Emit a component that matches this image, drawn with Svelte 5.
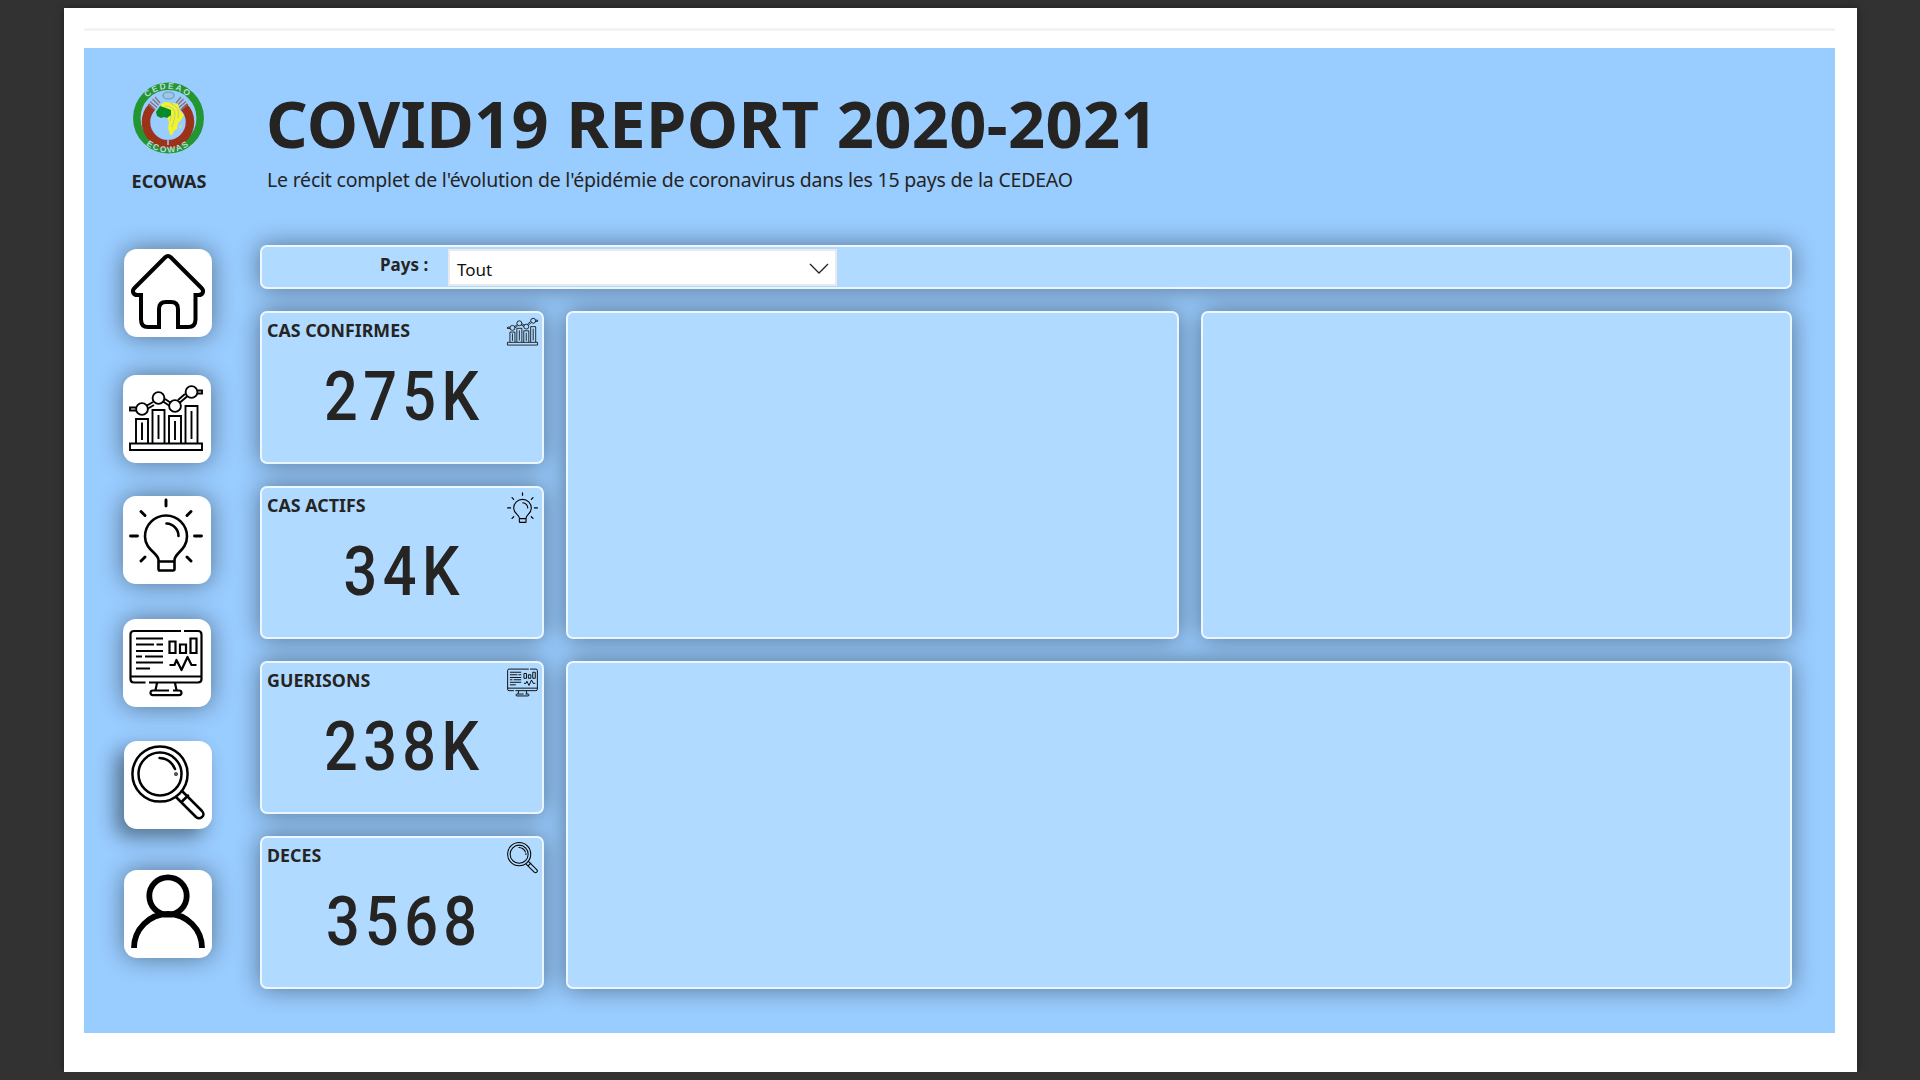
<script>
  const nav = ['home', 'chart', 'bulb', 'monitor', 'search', 'user'];
  const cards = [
    { title: 'CAS CONFIRMES', value: '275K', icon: 'chart' },
    { title: 'CAS ACTIFS', value: '34K', icon: 'bulb' },
    { title: 'GUERISONS', value: '238K', icon: 'monitor' },
    { title: 'DECES', value: '3568', icon: 'search' },
  ];
</script>

{#snippet icon(name)}
  <svg class="icon" viewBox="0 0 74 74" fill="none" stroke="#000" stroke-width="2.5" stroke-linecap="round" stroke-linejoin="round">
    {#if name === 'home'}
      <path stroke-width="4" stroke-linejoin="miter" stroke-linecap="butt" d="M30 74H17Q10 74 10 66.500V42H6.500C2 42 .5 38 3.500 35L34 4.500Q37 1.500 40 4.500L70.500 35C73.500 38 72 42 67.500 42H64.500V66.500Q64.500 74 57 74H47V56Q47 49 40 49H35Q28 49 28 56V74" transform="translate(0 -1)" />
    {:else if name === 'chart'}
      <g stroke-width="1.9" stroke-linecap="butt" stroke-linejoin="miter">
        <path d="M1 60.500h72v6.500H1zM7 60V36h12v24M23.500 60V27h12v33M40 60V33h12v27M56.500 60V23h12v37M13 39.500V57M29.500 32V56M46 38V57M62.500 28V56" />
        <path d="M7 24.500H1v3h6M68.500 7.500H73v3h-4.500M18 22.500l6-3.500M19 25.500l6-3.500M34 18.500l6 4M36 16l6 4M51 19.500l7-6M49 17l7-6" />
        <circle cx="13" cy="26" r="5.900" /><circle cx="29.500" cy="15" r="5.900" /><circle cx="46" cy="23" r="5.900" /><circle cx="62.500" cy="9" r="5.900" />
      </g>
    {:else if name === 'bulb'}
      <path stroke-width="2.600" d="M30 72.500h14q1.500 0 1.500-1.500V62C45.500 55 58 52 58 38.500A21 21 0 0 0 16 38.500C16 52 29.500 55 29.500 62v9q0 1.500 1.500 1.500M30 63.500h15M37.500 25.500A12.500 12.500 0 0 1 49.500 38" />
      <path stroke-width="2.900" d="M37 2v6M1.500 38h7M65.500 38h7M12 13.500l4 4M62 13.500l-4 4M12 63l4-4M62 63l-4-4" />
    {:else if name === 'monitor'}
      <g stroke-width="2.200" stroke-linecap="butt">
        <path d="M52 5H5Q1.500 5 1.500 8.500V53Q1.500 56.500 5 56.500H16.500M20 56.500H69Q72.500 56.500 72.500 53V8.500Q72.500 5 69 5H55M1.500 50.500H72.500M28 57l-1.500 7M46 57l1.500 7M40 64.500H24q-2.500 0-2.500 2.300t2.500 2.300h26q2.500 0 2.500-2.300t-2.500-2.300h-6" />
        <path d="M7 12.500h27M7 18.500h18M27.500 18.500H34M7 25h27M7 30.500h6M16 30.500h18M7 36.500h27M7 42.500h14M40.500 39h5l2-5 5 10 6-13 4 8h5" />
        <path stroke-linejoin="miter" d="M40.500 15.500h6V27h-6zM51 18.500h6V27h-6zM61.500 12.500h6V27h-6z" />
      </g>
    {:else if name === 'search'}
      <circle cx="29" cy="29" r="27.600" /><circle cx="29" cy="29" r="21.500" />
      <path d="M28.500 13q11 .5 15.500 11M45 52l20 20q3 2.500 6 0t0-6L51 46M51.500 56l5.500-5.500" />
      <circle cx="45" cy="29" r=".6" />
    {:else}
      <g stroke-width="5.800" stroke-linecap="butt"><circle cx="37" cy="22" r="18.700" /><path d="M3 74a34 34 0 0 1 68 0" /></g>
    {/if}
  </svg>
{/snippet}

<div class="sheet">
  <div class="rule"></div>
  <main>
    <aside>
      <svg class="logo" viewBox="0 0 72 72" role="img" aria-label="CEDEAO ECOWAS">
        <defs>
          <path id="arc-top" d="M7 36a29 29 0 0 1 58 0" />
          <path id="arc-bottom" d="M1.500 36a34.500 34.500 0 0 0 69 0" />
        </defs>
        <circle cx="36.500" cy="36" r="31.700" fill="none" stroke="#239632" stroke-width="7.500" />
        <path d="M20.500 24.500A22 22 0 1 0 51.500 24.500" fill="none" stroke="#9d321b" stroke-width="8.500" />
        <path d="M36 53v10" stroke="#9cf" stroke-width="1.500" />
        <path d="M16 22l7 6M18 19.500l7 6M20.500 17l6 6M23 15l5 6M56 22l-7 6M54 19.500l-7 6M51.500 17l-6 6M49 15l-5 6" stroke="#8d6d70" stroke-width="1.200" />
        <ellipse cx="36.500" cy="13.500" rx="5.500" ry="3.500" fill="#9cc8e6" stroke="#759ab5" stroke-width="1.200" />
        <path d="M29 22l4-2 7 1 6 1 2 7 4 4-3 5-3 3-1 6-3 2-2 4h-2l-2-7 1-6-3-7-4-4z" fill="#f3f32a" />
        <path d="M33 24q11 0 10 10l-3 11M35 28q6 3 3 11M38 21q11 4 8 15" fill="none" stroke="#b6cf83" stroke-width="1" />
        <path d="M47.500 45l2-3-1 5z" fill="#f3f32a" />
        <path d="M24 30l4-6 6 2 5 2v5l-4 3-3-1-3 1-4-2z" fill="#078b29" />
        <g class="logo-text"><text><textPath href="#arc-top" startOffset="50%">CEDEAO</textPath></text>
        <text><textPath href="#arc-bottom" startOffset="50%">ECOWAS</textPath></text></g>
      </svg>
      <strong class="org">ECOWAS</strong>
      <nav>
        {#each nav as name}
          <button class={name} aria-label={name}>{@render icon(name)}</button>
        {/each}
      </nav>
    </aside>
    <section class="content">
      <header>
        <h1>COVID19 REPORT 2020-2021</h1>
        <p>Le récit complet de l'évolution de l'épidémie de coronavirus dans les 15 pays de la CEDEAO</p>
      </header>
      <div class="filter box">
        <strong>Pays :</strong>
        <div class="select"><span>Tout</span>
          <svg viewBox="0 0 20 12"><path d="M1 1l9 9 9-9" fill="none" stroke="#222" stroke-width="1.300" /></svg>
        </div>
      </div>
      <div class="board">
        <div class="cards">
          {#each cards as card}
            <article class="box">
              <h2>{card.title}</h2>
              <div class="mini">{@render icon(card.icon)}</div>
              <div class="value">{card.value}</div>
            </article>
          {/each}
        </div>
        <div class="box panel"></div>
        <div class="box panel"></div>
        <div class="box panel wide"></div>
      </div>
    </section>
  </main>
</div>

<style>
  :global(body) { background: #323232; overflow: hidden; }
  * { box-sizing: border-box; margin: 0; }
  .sheet { width: 1793px; height: 1064px; margin: 8px 0 0 64px; padding: 20px 22px 0 20px; background: #fff; box-shadow: 0 0 8px #0006; font-family: 'Noto Sans', 'Open Sans', sans-serif; color: #252423; }
  :global(#app) { display: flow-root; }
  .rule { height: 3px; background: #f3f3f3; border-radius: 2px; margin-bottom: 17px; }
  main { height: 985px; background: #9cf; display: flex; overflow: hidden; }
  aside { width: 176px; padding: 34px 0 0 39px; flex: none; }
  .logo { display: block; width: 72px; height: 72px; margin-left: 9px; overflow: visible; }
  .logo-text { font: 700 8.5px 'Liberation Sans', sans-serif; fill: #b9dcdc; letter-spacing: 1.6px; text-anchor: middle; }
  .org { display: block; width: 92px; line-height: 24px; font-size: 18px; letter-spacing: 0.1px; text-align: center; margin-top: 15px; }
  nav { display: flex; flex-direction: column; margin-top: 56px; }
  button { width: 88px; height: 88px; border: 0; border-radius: 13px; background: #fff; padding: 7px 8px 7px 6px; box-shadow: 0 0 24px #00000070; margin-bottom: 35px; }
  button.home { margin: 0 0 37.500px 1px; padding: 5px 7px 9px; }
  button.chart { margin-bottom: 33.500px; padding-top: 8px; padding-bottom: 6px; }
  button.bulb { padding-top: 2px; padding-bottom: 12px; }
  button.monitor { margin-bottom: 34px; }
  button.search { margin-left: 1px; margin-bottom: 41px; padding: 3.500px 7px 10.500px; box-shadow: -8px 8px 20px #00000073; }
  button.user { margin-left: 1px; padding: 4px 7px 10px; }
  .icon { display: block; width: 100%; height: 100%; overflow: visible; }
  .content { flex: 1; min-width: 0; padding: 0 43px 0 0; }
  header { height: 197px; padding: 31px 0 0 6px; white-space: nowrap; }
  h1 { font-size: 65px; line-height: 88px; font-weight: 700; letter-spacing: 0.35px; }
  header p { font-size: 19.500px; line-height: 26px; letter-spacing: -0.21px; padding-left: 1px; }
  .box { background: #b0daff; border: 2px solid #eef7ff; border-radius: 7px; box-shadow: 0 0 24px #00000070; }
  .filter { height: 44px; width: 1532px; display: flex; padding: 2px 0 0 118px; font-size: 17px; }
  .filter strong { width: 68px; line-height: 32px; letter-spacing: 0; }
  .select { width: 389px; height: 37px; background: #fff; border: 2px solid #eaeaea; padding: 0 6px 0 7px; display: flex; align-items: center; justify-content: space-between; color: #111; }
  .select span { padding-top: 3px; }
  .select svg { width: 20px; height: 12px; margin-top: 2px; }
  .board { margin-top: 22px; height: 678px; display: grid; grid-template: 328px 328px / 284px 613px 591px; gap: 22px; }
  .cards { grid-row: 1 / 3; display: grid; grid-template-rows: repeat(4, 153px); row-gap: 22px; }
  article { display: grid; grid-template: 39px 1fr / 1fr 31px; padding: 0 4px 0 5px; }
  h2 { font-size: 17.800px; line-height: 34px; letter-spacing: 0.03px; white-space: nowrap; }
  .mini { width: 31px; height: 35px; padding-top: 4px; }
  .value { grid-column: 1 / 3; text-align: center; font: 500 69px/90px Roboto, sans-serif; letter-spacing: 6.300px; padding-left: 4px; transform: scaleX(0.86); }
  .wide { grid-column: 2 / 4; }
</style>
